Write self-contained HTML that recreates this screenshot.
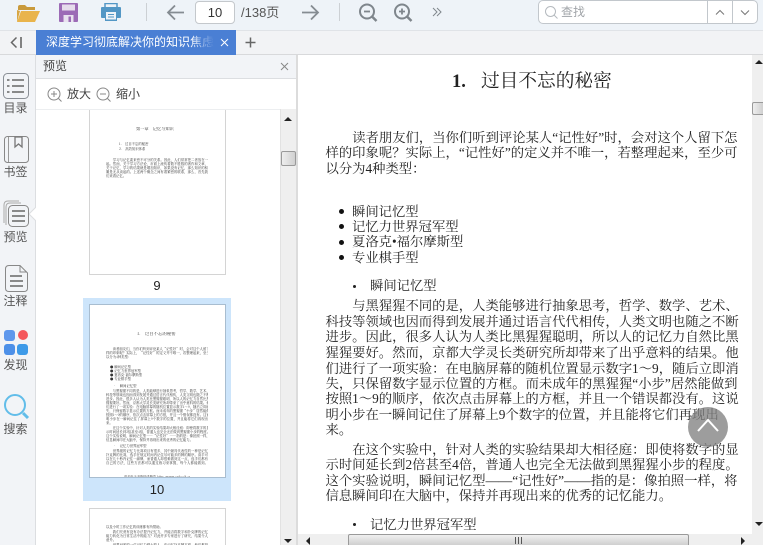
<!DOCTYPE html>
<html lang="zh"><head><meta charset="utf-8"><title>预览</title>
<style>
html,body{margin:0;padding:0;width:763px;height:545px;overflow:hidden}
body{background:#fff;font-family:"Liberation Sans","Noto Sans CJK SC",sans-serif;color:#444}
#r{position:absolute;left:0;top:0;width:763px;height:545px;overflow:hidden;background:#fff}
#r div,#r svg{position:absolute}
.l{left:325.5px;width:412px;height:16px;line-height:16px;font-family:"Liberation Serif","Noto Serif CJK SC",serif;font-size:13.33px;color:#222;white-space:nowrap;text-align:justify;text-align-last:justify}
.n{text-align-last:left;width:auto}
.dot{width:5px;height:5px;border-radius:50%;background:#111}
.dot2{width:3px;height:3px;border-radius:50%;background:#222}
.sl{left:0;width:31px;text-align:center;font-size:12px;line-height:16px;color:#555}
.page{left:89px;width:135px;background:#fff;border:1px solid #d4d4d4;overflow:hidden}
.t{left:16px;width:102px;height:4px;line-height:4px;font-size:3.35px;font-family:"Noto Serif CJK SC",serif;color:#333;white-space:nowrap;overflow:hidden;text-align:justify;text-align-last:justify}
.tn{text-align-last:left}
</style></head><body><div id="r">

<!-- page 9 -->
<div class="page" style="top:100px;height:173px">
<div class="t tn" style="top:26px;left:46px;font-size:4.2px;width:50px">第一章　记忆与知识</div>
<div class="t tn" style="top:41px;left:29px">1.　过目不忘的秘密</div>
<div class="t tn" style="top:46px;left:29px">2.　高效知识体系</div>
<div class="t" style="top:57px">　　学习与记忆素来密不可分的关系。因此，人们常常把二者放在一</div>
<div class="t" style="top:61px">起。然而，关于学习方法论，市面上流传着数不胜数的著作和文章，</div>
<div class="t" style="top:65px">关于记忆，学习的结果就是增加知识，如果没有记忆，那么知识的积</div>
<div class="t" style="top:69px">累是无从谈起的。上述两个概念之间有着紧密的联系，那么，首先我</div>
<div class="t tn" style="top:73px">们来看记忆。</div>
</div>
<div style="left:90px;top:278px;width:134px;text-align:center;font-size:13px;line-height:16px;color:#222">9</div>

<!-- page 10 -->
<div style="left:83px;top:298px;width:148px;height:203px;background:#cde5fb"></div>
<div class="page" style="top:304px;height:172px;border-color:#a8bdd0">
<div class="t tn" style="top:27px;left:47px;font-size:4.4px;width:50px;color:#333">1.　过目不忘的秘密</div>
<div class="t" style="top:42px">　　读者朋友们，当你们听到评论某人“记性好”时，会对这个人留下怎</div>
<div class="t" style="top:46px">样的印象呢？实际上，“记性好”的定义并不唯一，若整理起来，至少可</div>
<div class="t tn" style="top:50px">以分为4种类型：</div>
<div class="t tn" style="top:60px;left:20px">● 瞬间记忆型</div>
<div class="t tn" style="top:64px;left:20px">● 记忆力世界冠军型</div>
<div class="t tn" style="top:68px;left:20px">● 夏洛克·福尔摩斯型</div>
<div class="t tn" style="top:72px;left:20px">● 专业棋手型</div>
<div class="t tn" style="top:79px;left:23px">•　瞬间记忆型</div>
<div class="t" style="top:84px">　　与黑猩猩不同的是，人类能够进行抽象思考，哲学、数学、艺术、</div>
<div class="t" style="top:88px">科技等领域也因而得到发展并通过语言代代相传，人类文明也随之不断</div>
<div class="t" style="top:92px">进步。因此，很多人认为人类比黑猩猩聪明，所以人的记忆力自然比黑</div>
<div class="t" style="top:96px">猩猩要好。然而，京都大学灵长类研究所却带来了出乎意料的结果。他</div>
<div class="t" style="top:100px">们进行了一项实验：在电脑屏幕的随机位置显示数字1～9，随后立即消</div>
<div class="t" style="top:104px">失，只保留数字显示位置的方框。而未成年的黑猩猩“小步”居然能做到</div>
<div class="t" style="top:108px">按照1～9的顺序，依次点击屏幕上的方框，并且一个错误都没有。这说</div>
<div class="t" style="top:112px">明小步在一瞬间记住了屏幕上9个数字的位置，并且能将它们再现出</div>
<div class="t tn" style="top:116px">来。</div>
<div class="t" style="top:121px">　　在这个实验中，针对人类的实验结果却大相径庭：即使将数字的显</div>
<div class="t" style="top:125px">示时间延长到2倍甚至4倍，普通人也完全无法做到黑猩猩小步的程度。</div>
<div class="t" style="top:129px">这个实验说明，瞬间记忆型——“记性好”——指的是：像拍照一样，将</div>
<div class="t tn" style="top:133px">信息瞬间印在大脑中，保持并再现出来的优秀的记忆能力。</div>
<div class="t tn" style="top:139px;left:23px">•　记忆力世界冠军型</div>
<div class="t" style="top:144px">　　世界级的记忆力比赛项目有很多，其中最具代表性的一种是记忆</div>
<div class="t" style="top:148px">扑克牌的比赛，选手在规定时间内记住尽可能多的牌的顺序。高手可</div>
<div class="t" style="top:152px">以在几十秒内记住一副牌，而普通人却很难做到这一点，选手们都有</div>
<div class="t" style="top:156px">自己的方法，这些方法都可以通过练习来掌握，每个人都能做到。</div>
<div class="t" style="top:170px;left:34px;width:66px;text-align-last:left;font-size:3.2px">更多电子书资料请搜索 http://www.cnbook.org</div>
</div>
<div style="left:90px;top:482px;width:134px;text-align:center;font-size:13px;line-height:16px;color:#222">10</div>

<!-- page 11 -->
<div class="page" style="top:508px;height:60px">
<div class="t tn" style="top:16px">以及小时工作记忆的训练都有所帮助。</div>
<div class="t" style="top:21px">　　我们究竟有没有办法提升记忆力，并能否将数字和扑克牌的记忆</div>
<div class="t" style="top:25px">能力转化为日常生活中的能力？对此许多专家进行了研究，结果令人</div>
<div class="t tn" style="top:29px">意外。</div>
<div class="t" style="top:34px">　　世界冠军的一位记忆力强大的人，在记忆扑克牌方面，他们都是</div>
</div>

<!-- toolbar -->
<div style="left:0;top:0;width:763px;height:30px;background:#eef3f8;border-bottom:1px solid #e0e3e7"></div>
<svg style="left:15px;top:2px" width="26" height="22" viewBox="0 0 26 22"><path d="M3 5q0-2 2-2h5l2 2h8v3H3z" fill="#c99a3c"/><path d="M2 20l4-11h19l-5 11z" fill="#e9b44c"/><path d="M2 8v12l3-11z" fill="#d8a643"/></svg>
<svg style="left:59px;top:3px" width="19" height="19" viewBox="0 0 19 19"><path d="M0 1q0-1 1-1h17q1 0 1 1v17q0 1-1 1H1q-1 0-1-1z" fill="#9c6bb6"/><rect x="3" y="1.5" width="13" height="6" fill="#e6ddec"/><rect x="4.500" y="12" width="10" height="7" fill="#e9e2ef"/><rect x="9.500" y="13.500" width="2.500" height="5.500" fill="#9c6bb6"/></svg>
<svg style="left:101px;top:3px" width="20" height="18" viewBox="0 0 20 18"><rect x="4" y="0.500" width="12" height="5" fill="none" stroke="#5397c5" stroke-width="1.500"/><path d="M1 4h18q1 0 1 1v9q0 1-1 1h-3v3H4v-3H1q-1 0-1-1V5q0-1 1-1z" fill="#5397c5"/><rect x="5" y="9" width="10" height="7.500" fill="#eef3f8"/><path d="M7 11.500h6M7 14h6" stroke="#5397c5" stroke-width="1"/></svg>
<div style="left:146px;top:3px;width:1px;height:18px;background:#ccd0d4"></div>
<svg style="left:166px;top:4px" width="19" height="17" viewBox="0 0 19 17"><path d="M18 8.500H2M9 1.500L2 8.500l7 7" fill="none" stroke="#858c92" stroke-width="1.800"/></svg>
<div style="left:195px;top:1px;width:38px;height:21px;background:#fff;border:1px solid #c4c8cc;border-radius:4px;text-align:center;font-size:13px;line-height:21px;color:#333">10</div>
<div style="left:241px;top:4px;font-size:13px;line-height:18px;color:#555;white-space:nowrap">/138页</div>
<svg style="left:301px;top:4px" width="19" height="17" viewBox="0 0 19 17"><path d="M1 8.500h16M10 1.500l7 7-7 7" fill="none" stroke="#858c92" stroke-width="1.800"/></svg>
<div style="left:339px;top:3px;width:1px;height:18px;background:#ccd0d4"></div>
<svg style="left:358px;top:3px" width="20" height="19" viewBox="0 0 20 19"><circle cx="9" cy="8.500" r="7" fill="none" stroke="#7f868c" stroke-width="2"/><path d="M14 13.500l4.500 4.500" stroke="#7f868c" stroke-width="2.500"/><path d="M6 8.500h6" stroke="#7f868c" stroke-width="1.800"/></svg>
<svg style="left:393px;top:3px" width="20" height="19" viewBox="0 0 20 19"><circle cx="9" cy="8.500" r="7" fill="none" stroke="#7f868c" stroke-width="2"/><path d="M14 13.500l4.500 4.500" stroke="#7f868c" stroke-width="2.500"/><path d="M6 8.500h6M9 5.500v6" stroke="#7f868c" stroke-width="1.800"/></svg>
<svg style="left:432px;top:7px" width="10" height="10" viewBox="0 0 10 10"><path d="M1 1l4 4-4 4M5 1l4 4-4 4" fill="none" stroke="#7f868c" stroke-width="1"/></svg>

<!-- search -->
<div style="left:538px;top:0;width:218px;height:22px;background:#fff;border:1px solid #c2c7cc;border-radius:5px"></div>
<div style="left:707px;top:1px;width:1px;height:22px;background:#c2c7cc"></div>
<div style="left:732px;top:1px;width:1px;height:22px;background:#c2c7cc"></div>
<svg style="left:544px;top:5px" width="15" height="15" viewBox="0 0 15 15"><circle cx="6.500" cy="6.500" r="5" fill="none" stroke="#b5babf" stroke-width="1"/><path d="M10 10l3.500 3.500" stroke="#b5babf"/></svg>
<div style="left:561px;top:4px;font-size:12px;line-height:17px;color:#a0a4a8">查找</div>
<svg style="left:715px;top:9px" width="10" height="7" viewBox="0 0 10 7"><path d="M1 5.500l4-4 4 4" fill="none" stroke="#777" stroke-width="1"/></svg>
<svg style="left:740px;top:9px" width="10" height="7" viewBox="0 0 10 7"><path d="M1 1.500l4 4 4-4" fill="none" stroke="#777" stroke-width="1"/></svg>

<!-- tab bar -->
<div style="left:0;top:31px;width:763px;height:23px;background:#f2f3f5;border-bottom:1px solid #d8d9db"></div>
<svg style="left:9px;top:36px" width="15" height="13" viewBox="0 0 15 13"><path d="M7.500 1.500l-5 5 5 5" fill="none" stroke="#666" stroke-width="1.500"/><path d="M12 1v11" stroke="#666" stroke-width="1.600"/></svg>
<div style="left:36px;top:30px;width:200px;height:25px;background:#4a7fd4"></div>
<div style="left:46px;top:33px;width:168px;height:19px;overflow:hidden;font-size:12px;line-height:19px;color:#fff;white-space:nowrap">深度学习彻底解决你的知识焦虑</div>
<div style="left:190px;top:33px;width:24px;height:19px;background:linear-gradient(90deg,rgba(74,127,212,0),#4a7fd4)"></div>
<svg style="left:220px;top:38px" width="9" height="9" viewBox="0 0 9 9"><path d="M1 1l7 7M8 1l-7 7" stroke="#fff" stroke-width="1"/></svg>
<svg style="left:244px;top:36px" width="13" height="13" viewBox="0 0 13 13"><path d="M1.500 6.500h10M6.500 1.500v10" stroke="#666" stroke-width="1.500"/></svg>

<!-- sidebar -->
<div style="left:0;top:55px;width:35px;height:490px;background:#f2f4f7;border-right:1px solid #dcdee1"></div>
<svg style="left:3px;top:73px" width="26" height="26" viewBox="0 0 26 26"><rect x=".5" y=".5" width="25" height="25" rx="4" fill="none" stroke="#8a8f95"/><path d="M9 7h12M9 13h12M9 19h12" stroke="#666" stroke-width="1.500"/><path d="M4 7h2.500M4 13h2.500M4 19h2.500" stroke="#666" stroke-width="1.500"/></svg>
<div class="sl" style="top:100px">目录</div>
<svg style="left:4px;top:136px" width="25" height="27" viewBox="0 0 25 27"><rect x=".5" y=".5" width="24" height="26" rx="3" fill="none" stroke="#888"/><path d="M4.500 1v25" stroke="#999"/><path d="M11 1h7v10l-3.500-3-3.500 3z" fill="none" stroke="#777" stroke-width="1.300"/></svg>
<div class="sl" style="top:164px">书签</div>
<svg style="left:3px;top:200px" width="27" height="28" viewBox="0 0 27 28"><path d="M16 1H5Q1 1 1 5v18" fill="none" stroke="#aaa"/><path d="M18 3H7Q3 3 3 7v18" fill="none" stroke="#aaa"/><rect x="5.500" y="5.500" width="20" height="21" rx="4" fill="#f2f4f7" stroke="#888"/><path d="M9 11h13M9 16h13M9 21h13" stroke="#666" stroke-width="1.500"/></svg>
<svg style="left:29px;top:207px" width="7" height="14" viewBox="0 0 7 14"><path d="M7 0L0 7l7 7z" fill="#fff"/><path d="M7 0L0 7l7 7" fill="none" stroke="#dcdee1"/></svg>
<div class="sl" style="top:229px">预览</div>
<svg style="left:5px;top:265px" width="23" height="27" viewBox="0 0 23 27"><path d="M4 .5h11l7.500 7.500v15q0 3.500-3.500 3.500H4Q.5 26.500.5 23V4Q.5.5 4 .5z" fill="none" stroke="#888"/><path d="M15 1v6h7" fill="none" stroke="#888"/><path d="M5 11h12M5 16h13M5 21h13" stroke="#666" stroke-width="1.500"/></svg>
<div class="sl" style="top:293px">注释</div>
<div style="left:4px;top:330px;width:11px;height:11px;border-radius:3px;background:#5e97ec"></div>
<div style="left:18px;top:330px;width:10px;height:10px;border-radius:50%;background:#f4575c"></div>
<div style="left:4px;top:344px;width:11px;height:11px;border-radius:3px;background:#4d90e8"></div>
<div style="left:17px;top:344px;width:11px;height:11px;border-radius:3px;background:#3e9ae8"></div>
<div class="sl" style="top:357px">发现</div>
<svg style="left:3px;top:393px" width="27" height="27" viewBox="0 0 27 27"><circle cx="12" cy="12" r="10" fill="none" stroke="#62bde9" stroke-width="2"/><path d="M20 20l5 5" stroke="#62bde9" stroke-width="3"/></svg>
<div class="sl" style="top:421px">搜索</div>

<!-- preview panel -->
<div style="left:36px;top:79px;width:244px;height:31px;background:#fff"></div>
<div style="left:36px;top:55px;width:260px;height:23px;background:#f2f4f7;border-bottom:1px solid #dcdee1"></div>
<div style="left:43px;top:58px;font-size:12px;line-height:17px;color:#444">预览</div>
<svg style="left:280px;top:62px" width="9" height="9" viewBox="0 0 9 9"><path d="M1 1l7 7M8 1l-7 7" stroke="#888" stroke-width="1"/></svg>
<svg style="left:47px;top:87px" width="16" height="16" viewBox="0 0 16 16"><circle cx="7" cy="7" r="6" fill="none" stroke="#888"/><path d="M4 7h6M7 4v6M11.500 11.500l3 3" stroke="#888"/></svg>
<div style="left:67px;top:86px;font-size:12px;line-height:17px;color:#444">放大</div>
<svg style="left:96px;top:87px" width="16" height="16" viewBox="0 0 16 16"><circle cx="7" cy="7" r="6" fill="none" stroke="#888"/><path d="M4 7h6M11.500 11.500l3 3" stroke="#888"/></svg>
<div style="left:116px;top:86px;font-size:12px;line-height:17px;color:#444">缩小</div>
<div style="left:36px;top:109px;width:244px;height:1px;background:#eceef0"></div>

<!-- preview scrollbar -->
<div style="left:280px;top:79px;width:16px;height:466px;background:#efefef;border-left:1px solid #e2e2e2"></div>
<div style="left:280px;top:79px;width:17px;height:30px;background:#fff"></div>
<svg style="left:283px;top:116px" width="10" height="6" viewBox="0 0 10 6"><path d="M5 1l4 4H1z" fill="#222"/></svg>
<svg style="left:283px;top:539px" width="10" height="5" viewBox="0 0 10 5"><path d="M1 0h8L5 4z" fill="#222"/></svg>
<div style="left:281px;top:151px;width:13px;height:13px;border:1px solid #9a9a9a;border-radius:2px;background:linear-gradient(90deg,#eee,#d0d0d0)"></div>
<div style="left:296px;top:55px;width:2px;height:490px;background:#dcdcdc"></div>

<!-- content -->
<div style="left:452px;top:70px;height:24px;line-height:24px;font-family:'Liberation Serif',serif;font-size:18.5px;font-weight:bold;color:#222;white-space:nowrap">1.</div>
<div style="left:481px;top:70px;height:24px;line-height:24px;font-family:'Liberation Serif','Noto Serif CJK SC',serif;font-size:18.7px;color:#222;white-space:nowrap">过目不忘的秘密</div>

<div class="l" style="top:130px;text-indent:26.7px">读者朋友们，当你们听到评论某人“记性好”时，会对这个人留下怎</div>
<div class="l" style="top:145px">样的印象呢？实际上，“记性好”的定义并不唯一，若整理起来，至少可</div>
<div class="l n" style="top:161px">以分为4种类型：</div>

<div class="dot" style="left:339px;top:209px"></div><div class="l n" style="left:352px;top:204px">瞬间记忆型</div>
<div class="dot" style="left:339px;top:224px"></div><div class="l n" style="left:352px;top:219px">记忆力世界冠军型</div>
<div class="dot" style="left:339px;top:240px"></div><div class="l n" style="left:352px;top:234px">夏洛克•福尔摩斯型</div>
<div class="dot" style="left:339px;top:255px"></div><div class="l n" style="left:352px;top:250px">专业棋手型</div>

<div class="dot2" style="left:353px;top:285px"></div><div class="l n" style="left:370px;top:278px">瞬间记忆型</div>

<div class="l" style="top:298px;text-indent:26.7px">与黑猩猩不同的是，人类能够进行抽象思考，哲学、数学、艺术、</div>
<div class="l" style="top:314px">科技等领域也因而得到发展并通过语言代代相传，人类文明也随之不断</div>
<div class="l" style="top:329px">进步。因此，很多人认为人类比黑猩猩聪明，所以人的记忆力自然比黑</div>
<div class="l" style="top:345px">猩猩要好。然而，京都大学灵长类研究所却带来了出乎意料的结果。他</div>
<div class="l" style="top:361px">们进行了一项实验：在电脑屏幕的随机位置显示数字1～9，随后立即消</div>
<div class="l" style="top:376px">失，只保留数字显示位置的方框。而未成年的黑猩猩“小步”居然能做到</div>
<div class="l" style="top:391px">按照1～9的顺序，依次点击屏幕上的方框，并且一个错误都没有。这说</div>
<div class="l n" style="top:407px">明小步在一瞬间记住了屏幕上9个数字的位置，并且能将它们再现出</div>
<div class="l n" style="top:422px">来。</div>

<div class="l" style="top:442px;text-indent:26.7px">在这个实验中，针对人类的实验结果却大相径庭：即使将数字的显</div>
<div class="l" style="top:457px">示时间延长到2倍甚至4倍，普通人也完全无法做到黑猩猩小步的程度。</div>
<div class="l" style="top:473px">这个实验说明，瞬间记忆型——“记性好”——指的是：像拍照一样，将</div>
<div class="l n" style="top:488px">信息瞬间印在大脑中，保持并再现出来的优秀的记忆能力。</div>

<div class="dot2" style="left:353px;top:523px"></div><div class="l n" style="left:370px;top:517px">记忆力世界冠军型</div>

<!-- back to top -->
<div style="left:688px;top:407px;width:40px;height:40px;border-radius:50%;background:rgba(130,130,130,.78)"></div>
<svg style="left:697px;top:417px" width="22" height="16" viewBox="0 0 22 16"><path d="M1 14L11 3l10 11" fill="none" stroke="#fff" stroke-width="2"/></svg>

<!-- right scrollbar -->
<div style="left:752px;top:55px;width:11px;height:490px;background:#efefef"></div>
<svg style="left:755px;top:60px" width="8" height="5" viewBox="0 0 8 5"><path d="M4 0l4 4H0z" fill="#222"/></svg>
<svg style="left:755px;top:522px" width="8" height="5" viewBox="0 0 8 5"><path d="M0 0h8L4 4z" fill="#222"/></svg>
<div style="left:752px;top:102px;width:11px;height:13px;border:1px solid #9a9a9a;border-right:0;border-radius:2px 0 0 2px;background:linear-gradient(90deg,#eee,#d0d0d0);box-sizing:border-box"></div>

<!-- bottom scrollbar -->
<div style="left:298px;top:534px;width:465px;height:11px;background:#efefef"></div>
<svg style="left:306px;top:537px" width="5" height="8" viewBox="0 0 5 8"><path d="M4 0v8L0 4z" fill="#222"/></svg>
<svg style="left:741px;top:537px" width="5" height="8" viewBox="0 0 5 8"><path d="M0 0v8l4-4z" fill="#222"/></svg>
<div style="left:348px;top:534px;width:341px;height:11px;box-sizing:border-box;border:1px solid #9a9a9a;border-bottom:0;border-radius:2px 2px 0 0;background:linear-gradient(180deg,#f0f0f0,#cfcfcf)"></div>
<svg style="left:515px;top:537px" width="7" height="7" viewBox="0 0 7 7"><path d="M.5 0v7M3.500 0v7M6.500 0v7" stroke="#555"/></svg>
</div></body></html>
